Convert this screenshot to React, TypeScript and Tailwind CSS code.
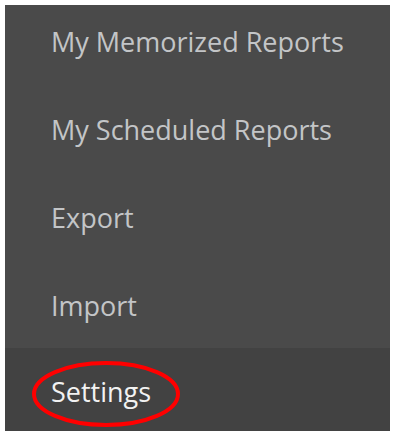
const items = ["My Memorized Reports", "My Scheduled Reports", "Export", "Import"];

export default function App() {
  return (
    <div
      className="h-[438px] w-[395px] bg-white px-[5px] pt-[5px] pb-[7px]"
      style={{ fontFamily: '"Open Sans", sans-serif' }}
    >
      <div className="flex h-full flex-col bg-[#4a4a4a]">
        {items.map((label, i) => (
          <div
            key={label}
            className={`${i === 3 ? "h-[79px]" : "h-[88px]"} shrink-0 pl-[46px] pt-[18px]`}
          >
            <span className="block text-[27px] leading-[37px] text-[#c3c5c7]">{label}</span>
          </div>
        ))}
        <div className="relative flex-1 bg-[#424242] pl-[46px] pt-[25px]">
          <span className="block text-[27px] leading-[37px] text-[#f2f2f2]">Settings</span>
          <svg className="absolute left-[26px] top-[12px]" width="150" height="68" viewBox="0 0 150 68">
            <ellipse cx="75" cy="34" rx="72" ry="31" fill="none" stroke="#ff0000" strokeWidth="4" />
          </svg>
        </div>
      </div>
    </div>
  );
}
